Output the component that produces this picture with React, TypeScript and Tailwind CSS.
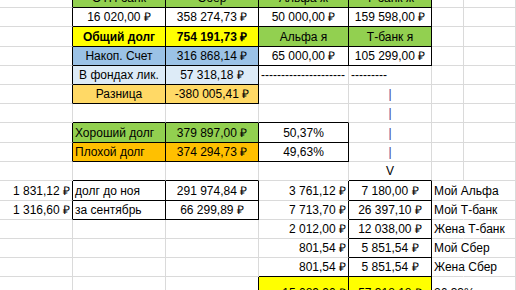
import clsx from "clsx";

type Cell = {
  t?: string;
  bg?: string;
  al?: "c" | "l" | "r";
  bold?: boolean;
  box?: boolean;
  color?: string;
  spill?: boolean;
};

type Row = {
  h: string;
  end?: boolean;
  cells: Cell[];
};

const GREEN = "bg-[#92d050]";
const YELLOW = "bg-[#ffff00]";
const BLUE = "bg-[#9bc2e6]";
const LIGHTBLUE = "bg-[#ddebf7]";
const SAND = "bg-[#ffd966]";
const ORANGE = "bg-[#ffc000]";

const widths = [
  "w-[73px]",
  "w-[93px]",
  "w-[93px]",
  "w-[90px]",
  "w-[83px]",
  "w-[32px]",
  "w-[52px]",
];

const E: Cell = {};
const bar: Cell = { t: "|", color: "text-[#3b3590]" };

const rows: Row[] = [
  {
    h: "h-[19px]",
    cells: [
      E,
      { t: "ОТП банк", bg: GREEN, box: true },
      { t: "Сбер", bg: GREEN, box: true },
      { t: "Альфа ж", bg: GREEN, box: true },
      { t: "Т-банк ж", bg: GREEN, box: true },
      E,
      E,
    ],
  },
  {
    h: "h-[19px]",
    cells: [
      E,
      { t: "16 020,00 ₽", box: true },
      { t: "358 274,73 ₽", box: true },
      { t: "50 000,00 ₽", box: true },
      { t: "159 598,00 ₽", box: true },
      E,
      E,
    ],
  },
  {
    h: "h-[20px]",
    cells: [
      E,
      { t: "Общий долг", bg: YELLOW, bold: true, box: true },
      { t: "754 191,73 ₽", bg: YELLOW, bold: true, box: true },
      { t: "Альфа я", bg: GREEN, box: true },
      { t: "Т-банк я", bg: GREEN, box: true },
      E,
      E,
    ],
  },
  {
    h: "h-[19px]",
    cells: [
      E,
      { t: "Накоп. Счет", bg: BLUE, box: true },
      { t: "316 868,14 ₽", bg: BLUE, box: true },
      { t: "65 000,00 ₽", box: true },
      { t: "105 299,00 ₽", box: true },
      E,
      E,
    ],
  },
  {
    h: "h-[19px]",
    cells: [
      E,
      { t: "В фондах лик.", bg: LIGHTBLUE, box: true },
      { t: "57 318,18 ₽", bg: LIGHTBLUE, box: true },
      { t: "---------------------", al: "l" },
      { t: "---------", al: "l" },
      E,
      E,
    ],
  },
  {
    h: "h-[19px]",
    cells: [
      E,
      { t: "Разница", bg: SAND, box: true },
      { t: "-380 005,41 ₽", bg: SAND, box: true },
      E,
      bar,
      E,
      E,
    ],
  },
  { h: "h-[19px]", cells: [E, E, E, E, bar, E, E] },
  {
    h: "h-[20px]",
    cells: [
      E,
      { t: "Хороший долг", bg: GREEN, al: "l", box: true },
      { t: "379 897,00 ₽", bg: GREEN, box: true },
      { t: "50,37%", box: true },
      bar,
      E,
      E,
    ],
  },
  {
    h: "h-[19px]",
    cells: [
      E,
      { t: "Плохой долг", bg: ORANGE, al: "l", box: true },
      { t: "374 294,73 ₽", bg: ORANGE, box: true },
      { t: "49,63%", box: true },
      bar,
      E,
      E,
    ],
  },
  { h: "h-[19px]", cells: [E, E, E, E, { t: "V" }, E, E] },
  {
    h: "h-[20px]",
    cells: [
      { t: "1 831,12 ₽", al: "r" },
      { t: "долг до ноя", al: "l", box: true },
      { t: "291 974,84 ₽", box: true },
      { t: "3 761,12 ₽", al: "r" },
      { t: "7 180,00 ₽", box: true },
      { t: "Мой Альфа", al: "l", spill: true },
      E,
    ],
  },
  {
    h: "h-[19px]",
    cells: [
      { t: "1 316,60 ₽", al: "r" },
      { t: "за сентябрь", al: "l", box: true },
      { t: "66 299,89 ₽", box: true },
      { t: "7 713,70 ₽", al: "r" },
      { t: "26 397,10 ₽", box: true },
      { t: "Мой Т-банк", al: "l", spill: true },
      E,
    ],
  },
  {
    h: "h-[19px]",
    cells: [
      E,
      E,
      E,
      { t: "2 012,00 ₽", al: "r" },
      { t: "12 038,00 ₽", box: true },
      { t: "Жена Т-банк", al: "l", spill: true },
      E,
    ],
  },
  {
    h: "h-[19px]",
    cells: [
      E,
      E,
      E,
      { t: "801,54 ₽", al: "r" },
      { t: "5 851,54 ₽", box: true },
      { t: "Мой Сбер", al: "l", spill: true },
      E,
    ],
  },
  {
    h: "h-[19px]",
    cells: [
      E,
      E,
      E,
      { t: "801,54 ₽", al: "r" },
      { t: "5 851,54 ₽", box: true },
      { t: "Жена Сбер", al: "l", spill: true },
      E,
    ],
  },
  {
    h: "h-[26px]",
    end: true,
    cells: [
      E,
      E,
      E,
      { t: "15 089,90 ₽", al: "r", bg: YELLOW, box: true },
      { t: "57 318,18 ₽", bg: YELLOW, box: true },
      { t: "26,33%", al: "l", spill: true },
      E,
    ],
  },
];

const boxed = (r: number, c: number) => !!rows[r]?.cells[c]?.box;

function SheetCell({ cell, r, c, end }: { cell: Cell; r: number; c: number; end?: boolean }) {
  const rightBlack = boxed(r, c) || boxed(r, c + 1);
  const bottomBlack = boxed(r, c) || boxed(r + 1, c);
  const al = cell.al ?? "c";

  return (
    <div
      className={clsx(
        "flex shrink-0 whitespace-nowrap border-r border-b px-[2px] leading-[18px]",
        widths[c],
        cell.bg,
        cell.color,
        end ? "items-end" : "items-center",
        cell.spill ? "overflow-visible" : "overflow-hidden",
        rightBlack
          ? "border-r-black"
          : cell.spill
            ? "border-r-transparent"
            : "border-r-[#dadada]",
        bottomBlack ? "border-b-black" : "border-b-[#dadada]",
        al === "c" && "justify-center",
        al === "l" && "justify-start",
        al === "r" && "justify-end",
        cell.bold && "font-bold"
      )}
    >
      {cell.t}
    </div>
  );
}

export default function App() {
  return (
    <div className="h-[290px] w-[516px] overflow-hidden bg-white font-['Liberation_Sans',Arial,sans-serif] text-[12px] text-black">
      <div className="-mt-[11px] flex flex-col">
        {rows.map((row, r) => (
          <div key={r} className={clsx("flex", row.h)}>
            {row.cells.map((cell, c) => (
              <SheetCell key={c} cell={cell} r={r} c={c} end={row.end} />
            ))}
          </div>
        ))}
      </div>
    </div>
  );
}
